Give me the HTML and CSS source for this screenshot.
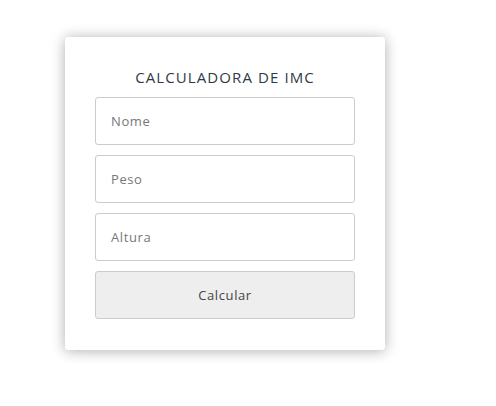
FILE: index.html
```html
<!DOCTYPE html>
<html lang="pt">
<head>
<meta charset="utf-8">
<title>Calculadora de IMC</title>
<link rel="stylesheet" href="styles.css">
</head>
<body>
<div class="page">
  <form class="card">
    <h1 class="title">CALCULADORA DE IMC</h1>
    <input class="field" type="text" placeholder="Nome">
    <input class="field" type="text" placeholder="Peso">
    <input class="field" type="text" placeholder="Altura">
    <button class="btn" type="button">Calcular</button>
  </form>
</div>
</body>
</html>
```

FILE: styles.css
```css
html, body {
  margin: 0;
  padding: 0;
  background: #fff;
}
.page {
  padding: 37px 0 50px 65px;
}
.card {
  width: 320px;
  box-sizing: border-box;
  padding: 30px 30px 31px;
  background: #fff;
  border-radius: 3px;
  box-shadow: 0 1px 14px rgba(0, 0, 0, 0.32);
  display: flex;
  flex-direction: column;
  gap: 10px;
  font-family: "Open Sans", "DejaVu Sans", sans-serif;
}
.title {
  margin: 0;
  font-size: 15px;
  line-height: 20px;
  font-weight: 500;
  letter-spacing: 1.1px;
  color: #2f3a45;
  text-align: center;
}
.field, .btn {
  height: 48px;
  width: 100%;
  box-sizing: border-box;
  border: 1px solid #ccc;
  border-radius: 3px;
  font-family: inherit;
  font-size: 13px;
  letter-spacing: 0.6px;
  outline: none;
}
.field {
  padding: 0 15px;
  color: #333;
  background: #fff;
}
.field::placeholder {
  color: #777;
}
.btn {
  background: #eee;
  color: #444;
  cursor: pointer;
}
```
